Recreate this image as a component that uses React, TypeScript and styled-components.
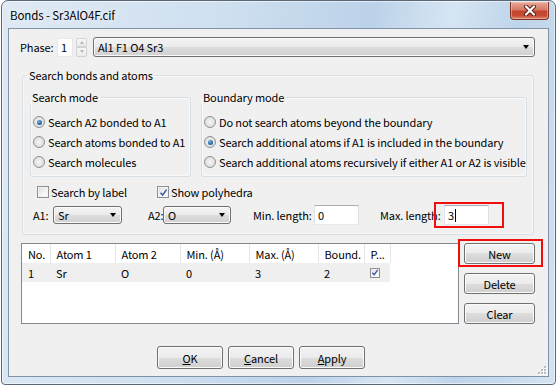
import React from 'react';
import styled, { createGlobalStyle } from 'styled-components';

const GlobalStyle = createGlobalStyle`
  html, body {
    margin: 0;
    padding: 0;
    background: #fff;
  }
  body {
    font-family: "Noto Sans CJK SC", "Noto Sans", sans-serif;
    font-size: 11px;
    letter-spacing: -0.12px;
    line-height: 16px;
    color: #000;
  }
  * {
    box-sizing: border-box;
  }
`;

const Window = styled.div`
  position: relative;
  width: 555px;
  height: 385px;
  margin-left: 1px;
  display: flex;
  flex-direction: column;
  padding: 0 6px 7px;
  border: 1px solid #5b6775;
  border-radius: 7px 7px 4px 4px;
  background: linear-gradient(100deg, #dfe9f5 0%, #cfe0f0 35%, #bcd2e9 60%, #d6e5f3 73%, #bed4ea 84%, #d3e3f2 100%);
  box-shadow: inset 0 0 0 1px rgba(255, 255, 255, 0.55);
`;

const TitleBar = styled.div`
  height: 27px;
  display: flex;
  align-items: center;
  padding-left: 2px;
  font-size: 11.5px;
`;

const Title = styled.span`
  flex: 1;
  text-shadow: 0 0 6px rgba(255, 255, 255, 0.95);
`;

const CloseButton = styled.div`
  align-self: flex-start;
  margin-top: 1px;
  width: 39px;
  height: 18px;
  display: flex;
  align-items: center;
  justify-content: center;
  border: 1px solid #7d3426;
  border-top: none;
  border-radius: 0 0 4px 4px;
  background: linear-gradient(#e9a898 0%, #d77a66 45%, #c2452b 55%, #c74b33 80%, #e08670 100%);
  box-shadow: inset 0 0 0 1px rgba(255, 210, 200, 0.45);
`;

const Client = styled.div`
  position: relative;
  flex: 1;
  display: flex;
  flex-direction: column;
  padding: 8px 13px 7px 12px;
  border: 1px solid #7f92a6;
  background: #f0f0f0;
`;

const PhaseRow = styled.div`
  display: flex;
  align-items: center;
  height: 20px;
`;

const Label = styled.span<{ $w?: number; $ml?: number }>`
  flex: none;
  width: ${p => (p.$w ? `${p.$w}px` : 'auto')};
  margin-left: ${p => p.$ml ?? 0}px;
  white-space: nowrap;
`;

const SpinValue = styled.div`
  width: 16px;
  height: 19px;
  padding-left: 3px;
  background: #fff;
  border: 1px solid #e6e8ec;
  line-height: 17px;
`;

const SpinButtons = styled.div`
  margin-left: 3px;
  width: 11px;
  height: 19px;
  display: flex;
  flex-direction: column;
`;

const SpinHalf = styled.div<{ $up?: boolean }>`
  flex: 1;
  display: flex;
  align-items: center;
  justify-content: center;
  border: 1px solid #d2d2d2;
  border-radius: ${p => (p.$up ? '2px 2px 0 0' : '0 0 2px 2px')};
  background: linear-gradient(#f7f7f7, #ececec);
  &::after {
    content: '';
    border-left: 2.5px solid transparent;
    border-right: 2.5px solid transparent;
    ${p => (p.$up ? 'border-bottom' : 'border-top')}: 3px solid #b8b8b8;
  }
`;

const Combo = styled.div<{ $w?: number; $h?: number }>`
  flex: ${p => (p.$w ? 'none' : 1)};
  width: ${p => (p.$w ? `${p.$w}px` : 'auto')};
  height: ${p => p.$h ?? 20}px;
  display: flex;
  align-items: center;
  padding: 0 5px 0 4px;
  border: 1px solid #707070;
  border-radius: 3px;
  background: linear-gradient(#f3f3f3 0%, #ebebeb 50%, #dddddd 50%, #d0d0d0 100%);
  box-shadow: inset 0 0 0 1px #fbfbfb;
  span {
    flex: 1;
  }
  &::after {
    content: '';
    border-left: 3.5px solid transparent;
    border-right: 3.5px solid transparent;
    border-top: 4px solid #000;
  }
`;

const Group = styled.fieldset<{ $w?: number }>`
  flex: ${p => (p.$w ? 'none' : 1)};
  width: ${p => (p.$w ? `${p.$w}px` : 'auto')};
  min-width: 0;
  margin: 0;
  padding: 7px 2px 4px;
  border: 1px solid #d5dfe5;
  border-radius: 3px;
  box-shadow: inset 0 0 0 1px rgba(255, 255, 255, 0.6);
  legend {
    margin-left: 2px;
    padding: 0 2px;
    line-height: 16px;
  }
`;

const OuterGroup = styled(Group)`
  flex: none;
  margin: 10px 1px 0 1px;
  padding: 6px 6px 9px 7px;
  legend {
    margin-left: -3px;
  }
`;

const GroupsRow = styled.div`
  display: flex;
  gap: 10px;
`;

const Option = styled.div`
  display: flex;
  align-items: center;
  gap: 3px;
  height: 20px;
  white-space: nowrap;
`;

const RadioDot = styled.span<{ $on?: boolean }>`
  position: relative;
  flex: none;
  width: 12px;
  height: 12px;
  border-radius: 50%;
  border: 1px solid #8f9191;
  background: radial-gradient(circle at 50% 50%, #f6f6f6 0%, #e4e4e4 55%, #d0d0d0 100%);
  &::after {
    content: '';
    display: ${p => (p.$on ? 'block' : 'none')};
    position: absolute;
    left: 2.5px;
    top: 2.5px;
    width: 5px;
    height: 5px;
    border-radius: 50%;
    background: radial-gradient(circle at 40% 35%, #7fb4e6 0%, #2a68a8 55%, #163f6e 100%);
  }
`;

const CheckBox = styled.span<{ $size?: number }>`
  flex: none;
  width: ${p => p.$size ?? 12}px;
  height: ${p => p.$size ?? 12}px;
  display: flex;
  align-items: center;
  justify-content: center;
  border: 1px solid #8f9191;
  background: linear-gradient(135deg, #dadada 0%, #f6f6f6 60%, #fdfdfd 100%);
  box-shadow: inset 0 0 0 1px #f2f2f2;
`;

const CheckRow = styled.div`
  display: flex;
  align-items: center;
  height: 16px;
  margin-top: 7px;
  padding-left: 7px;
`;

const CheckItem = styled.div<{ $w?: number }>`
  display: flex;
  align-items: center;
  gap: 2px;
  width: ${p => (p.$w ? `${p.$w}px` : 'auto')};
  white-space: nowrap;
`;

const FieldRow = styled.div`
  display: flex;
  align-items: center;
  height: 20px;
  margin-top: 5px;
  padding-left: 3px;
`;

const TextInput = styled.div`
  position: relative;
  flex: none;
  width: 45px;
  height: 20px;
  display: flex;
  align-items: center;
  padding-left: 3px;
  background: #fff;
  border: 1px solid;
  border-color: #abadb3 #dbdfe6 #e3e9ef #e2e3ea;
`;

const Caret = styled.span`
  width: 1px;
  height: 13px;
  margin-left: 1px;
  background: #000;
`;

const RedBox = styled.span<{ $t: number; $r: number; $b: number; $l: number }>`
  position: absolute;
  top: ${p => p.$t}px;
  right: ${p => p.$r}px;
  bottom: ${p => p.$b}px;
  left: ${p => p.$l}px;
  border: 2px solid #f20d0d;
  pointer-events: none;
`;

const TableArea = styled.div`
  display: flex;
  gap: 5px;
  height: 81px;
  margin-top: 8px;
`;

const TableBox = styled.div`
  width: 438px;
  border: 1px solid #828790;
  background: #fff;
`;

const Grid = styled.table`
  width: 100%;
  border-collapse: collapse;
  table-layout: fixed;
`;

const HeadCell = styled.th<{ $w?: number }>`
  width: ${p => (p.$w ? `${p.$w}px` : 'auto')};
  height: 19px;
  padding: 0 0 0 6px;
  font-weight: normal;
  text-align: left;
  white-space: nowrap;
  overflow: hidden;
  border-right: ${p => (p.$w ? '1px solid #e5e5e5' : 'none')};
`;

const Cell = styled.td<{ $fill?: boolean }>`
  height: 19px;
  padding: 0 0 0 6px;
  background: ${p => (p.$fill ? 'transparent' : '#efefef')};
`;

const ButtonColumn = styled.div`
  display: flex;
  flex-direction: column;
  gap: 9px;
  width: 71px;
`;

const Button = styled.div<{ $w?: number; $h?: number }>`
  position: relative;
  flex: none;
  width: ${p => (p.$w ? `${p.$w}px` : '100%')};
  height: ${p => p.$h ?? 21}px;
  display: flex;
  align-items: center;
  justify-content: center;
  border: 1px solid #707070;
  border-radius: 3px;
  background: linear-gradient(#f3f3f3 0%, #ebebeb 50%, #dddddd 50%, #cfcfcf 100%);
  box-shadow: inset 0 0 0 1px #fbfbfb;
`;

const Footer = styled.div`
  display: flex;
  gap: 5px;
  margin-top: 22px;
  padding-left: 136px;
`;

const Grip = styled.svg`
  position: absolute;
  right: 1px;
  bottom: 1px;
`;

const Check = () => (
  <svg width="9" height="9" viewBox="0 0 9 9">
    <path d="M1.5 4.8 L3.6 7 L7.6 1.6" fill="none" stroke="#3b57a6" strokeWidth="1.5" />
  </svg>
);

const radiosLeft = ['Search A2 bonded to A1', 'Search atoms bonded to A1', 'Search molecules'];
const radiosRight = [
  'Do not search atoms beyond the boundary',
  'Search additional atoms if A1 is included in the boundary',
  'Search additional atoms recursively if either A1 or A2 is visible',
];

const columns = [
  { name: 'No.', w: 28 },
  { name: 'Atom 1', w: 65 },
  { name: 'Atom 2', w: 65 },
  { name: 'Min. (Å)', w: 69 },
  { name: 'Max. (Å)', w: 69 },
  { name: 'Bound.', w: 46 },
  { name: 'P...', w: 26 },
];

export default function App() {
  return (
    <>
      <GlobalStyle />
      <Window>
        <TitleBar>
          <Title>Bonds - Sr3AlO4F.cif</Title>
          <CloseButton>
            <svg width="14" height="11" viewBox="0 0 14 11">
              <path d="M3 1.5 L11 9.5 M11 1.5 L3 9.5" stroke="#5c1d12" strokeWidth="4" strokeLinecap="round" />
              <path d="M3 1.5 L11 9.5 M11 1.5 L3 9.5" stroke="#fff" strokeWidth="2.2" strokeLinecap="round" />
            </svg>
          </CloseButton>
        </TitleBar>

        <Client>
          <PhaseRow>
            <Label $w={37} $ml={-1}>Phase:</Label>
            <SpinValue>1</SpinValue>
            <SpinButtons>
              <SpinHalf $up />
              <SpinHalf />
            </SpinButtons>
            <Combo style={{ marginLeft: 6 }}>
              <span>Al1 F1 O4 Sr3</span>
            </Combo>
          </PhaseRow>

          <OuterGroup>
            <legend>Search bonds and atoms</legend>
            <GroupsRow>
              <Group $w={161}>
                <legend>Search mode</legend>
                {radiosLeft.map((t, i) => (
                  <Option key={t}>
                    <RadioDot $on={i === 0} />
                    {t}
                  </Option>
                ))}
              </Group>
              <Group>
                <legend>Boundary mode</legend>
                {radiosRight.map((t, i) => (
                  <Option key={t}>
                    <RadioDot $on={i === 1} />
                    {t}
                  </Option>
                ))}
              </Group>
            </GroupsRow>

            <CheckRow>
              <CheckItem $w={120}>
                <CheckBox />
                Search by label
              </CheckItem>
              <CheckItem>
                <CheckBox>
                  <Check />
                </CheckBox>
                Show polyhedra
              </CheckItem>
            </CheckRow>

            <FieldRow>
              <Label $w={20}>A1:</Label>
              <Combo $w={69} $h={18}>
                <span>Sr</span>
              </Combo>
              <Label $w={15} $ml={26}>A2:</Label>
              <Combo $w={68} $h={18}>
                <span>O</span>
              </Combo>
              <Label $w={61} $ml={22}>Min. length:</Label>
              <TextInput>0</TextInput>
              <Label $w={64} $ml={21}>Max. length:</Label>
              <TextInput>
                3
                <Caret />
                <RedBox $t={-4} $r={-16} $b={-4} $l={-11} />
              </TextInput>
            </FieldRow>
          </OuterGroup>

          <TableArea>
            <TableBox>
              <Grid>
                <thead>
                  <tr>
                    {columns.map(c => (
                      <HeadCell key={c.name} $w={c.w}>
                        {c.name}
                      </HeadCell>
                    ))}
                    <HeadCell />
                  </tr>
                </thead>
                <tbody>
                  <tr>
                    <Cell>1</Cell>
                    <Cell>Sr</Cell>
                    <Cell>O</Cell>
                    <Cell>0</Cell>
                    <Cell>3</Cell>
                    <Cell>2</Cell>
                    <Cell>
                      <CheckBox $size={10}>
                        <Check />
                      </CheckBox>
                    </Cell>
                    <Cell $fill />
                  </tr>
                </tbody>
              </Grid>
            </TableBox>
            <ButtonColumn>
              <Button>
                New
                <RedBox $t={-5} $r={-9} $b={-4} $l={-7} />
              </Button>
              <Button>Delete</Button>
              <Button>Clear</Button>
            </ButtonColumn>
          </TableArea>

          <Footer>
            <Button $w={66} $h={23}>
              <span><u>O</u>K</span>
            </Button>
            <Button $w={66} $h={23}>
              <span><u>C</u>ancel</span>
            </Button>
            <Button $w={66} $h={23}>
              <span><u>A</u>pply</span>
            </Button>
          </Footer>

          <Grip width="11" height="11" viewBox="0 0 11 11">
            {[
              [8, 2],
              [8, 5],
              [5, 5],
              [8, 8],
              [5, 8],
              [2, 8],
            ].map(([x, y]) => (
              <g key={`${x}-${y}`}>
                <rect x={x + 1} y={y + 1} width="2" height="2" fill="#fff" />
                <rect x={x} y={y} width="2" height="2" fill="#b8bcc2" />
              </g>
            ))}
          </Grip>
        </Client>
      </Window>
    </>
  );
}
